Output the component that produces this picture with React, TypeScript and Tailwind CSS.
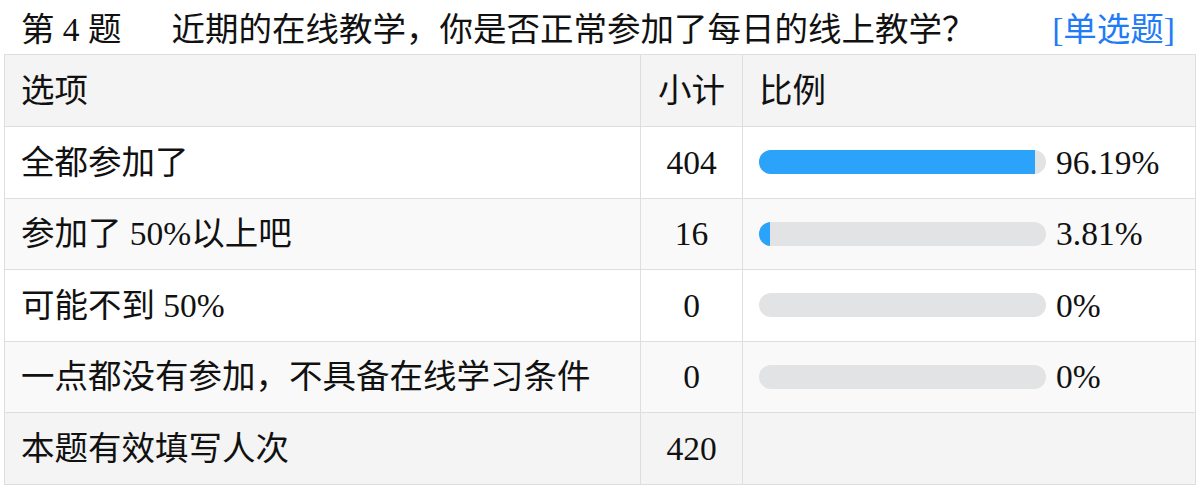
const rows = [
  { label: "全都参加了", count: 404, pct: 96.19, text: "96.19%" },
  { label: "参加了 50%以上吧", count: 16, pct: 3.81, text: "3.81%" },
  { label: "可能不到 50%", count: 0, pct: 0, text: "0%" },
  { label: "一点都没有参加，不具备在线学习条件", count: 0, pct: 0, text: "0%" },
];

function Bar({ pct }: { pct: number }) {
  return (
    <div className="w-[287px] h-[24px] rounded-full bg-[#e2e3e5] overflow-hidden shrink-0">
      <div className="h-full bg-[#2ca3fa]" style={{ width: `${pct}%` }} />
    </div>
  );
}

export default function App() {
  return (
    <div className="w-[1201px] h-[485px] bg-white text-[#111] text-[33.5px] leading-none font-['Liberation_Serif','Noto_Sans_CJK_SC',serif]">
      <div className="h-[54px] flex items-center pl-[21px] pr-[26px] pt-[6px]">
        <span>第 4 题</span>
        <span className="ml-[50px]">近期的在线教学，你是否正常参加了每日的线上教学？</span>
        <span className="ml-auto text-[#1f7cf6]">[单选题]</span>
      </div>
      <table className="ml-[4px] w-[1192px] border-collapse table-fixed">
        <colgroup>
          <col className="w-[636px]" />
          <col className="w-[102px]" />
          <col />
        </colgroup>
        <thead>
          <tr className="h-[72px] bg-[#f4f4f4]">
            <th className="border border-[#dedede] px-4 text-left font-normal">选项</th>
            <th className="border border-[#dedede] text-center font-normal">小计</th>
            <th className="border border-[#dedede] px-4 text-left font-normal">比例</th>
          </tr>
        </thead>
        <tbody>
          {rows.map((r, i) => (
            <tr key={r.label} className={`h-[71.5px] ${i % 2 === 1 ? "bg-[#f9f9f9]" : "bg-white"}`}>
              <td className="border border-[#dedede] px-4">{r.label}</td>
              <td className="border border-[#dedede] text-center">{r.count}</td>
              <td className="border border-[#dedede] pl-4">
                <div className="flex items-center">
                  <Bar pct={r.pct} />
                  <span className="ml-[10px]">{r.text}</span>
                </div>
              </td>
            </tr>
          ))}
          <tr className="h-[71.5px] bg-[#f4f4f4]">
            <td className="border border-[#dedede] px-4">本题有效填写人次</td>
            <td className="border border-[#dedede] text-center">420</td>
            <td className="border border-[#dedede]"></td>
          </tr>
        </tbody>
      </table>
    </div>
  );
}
